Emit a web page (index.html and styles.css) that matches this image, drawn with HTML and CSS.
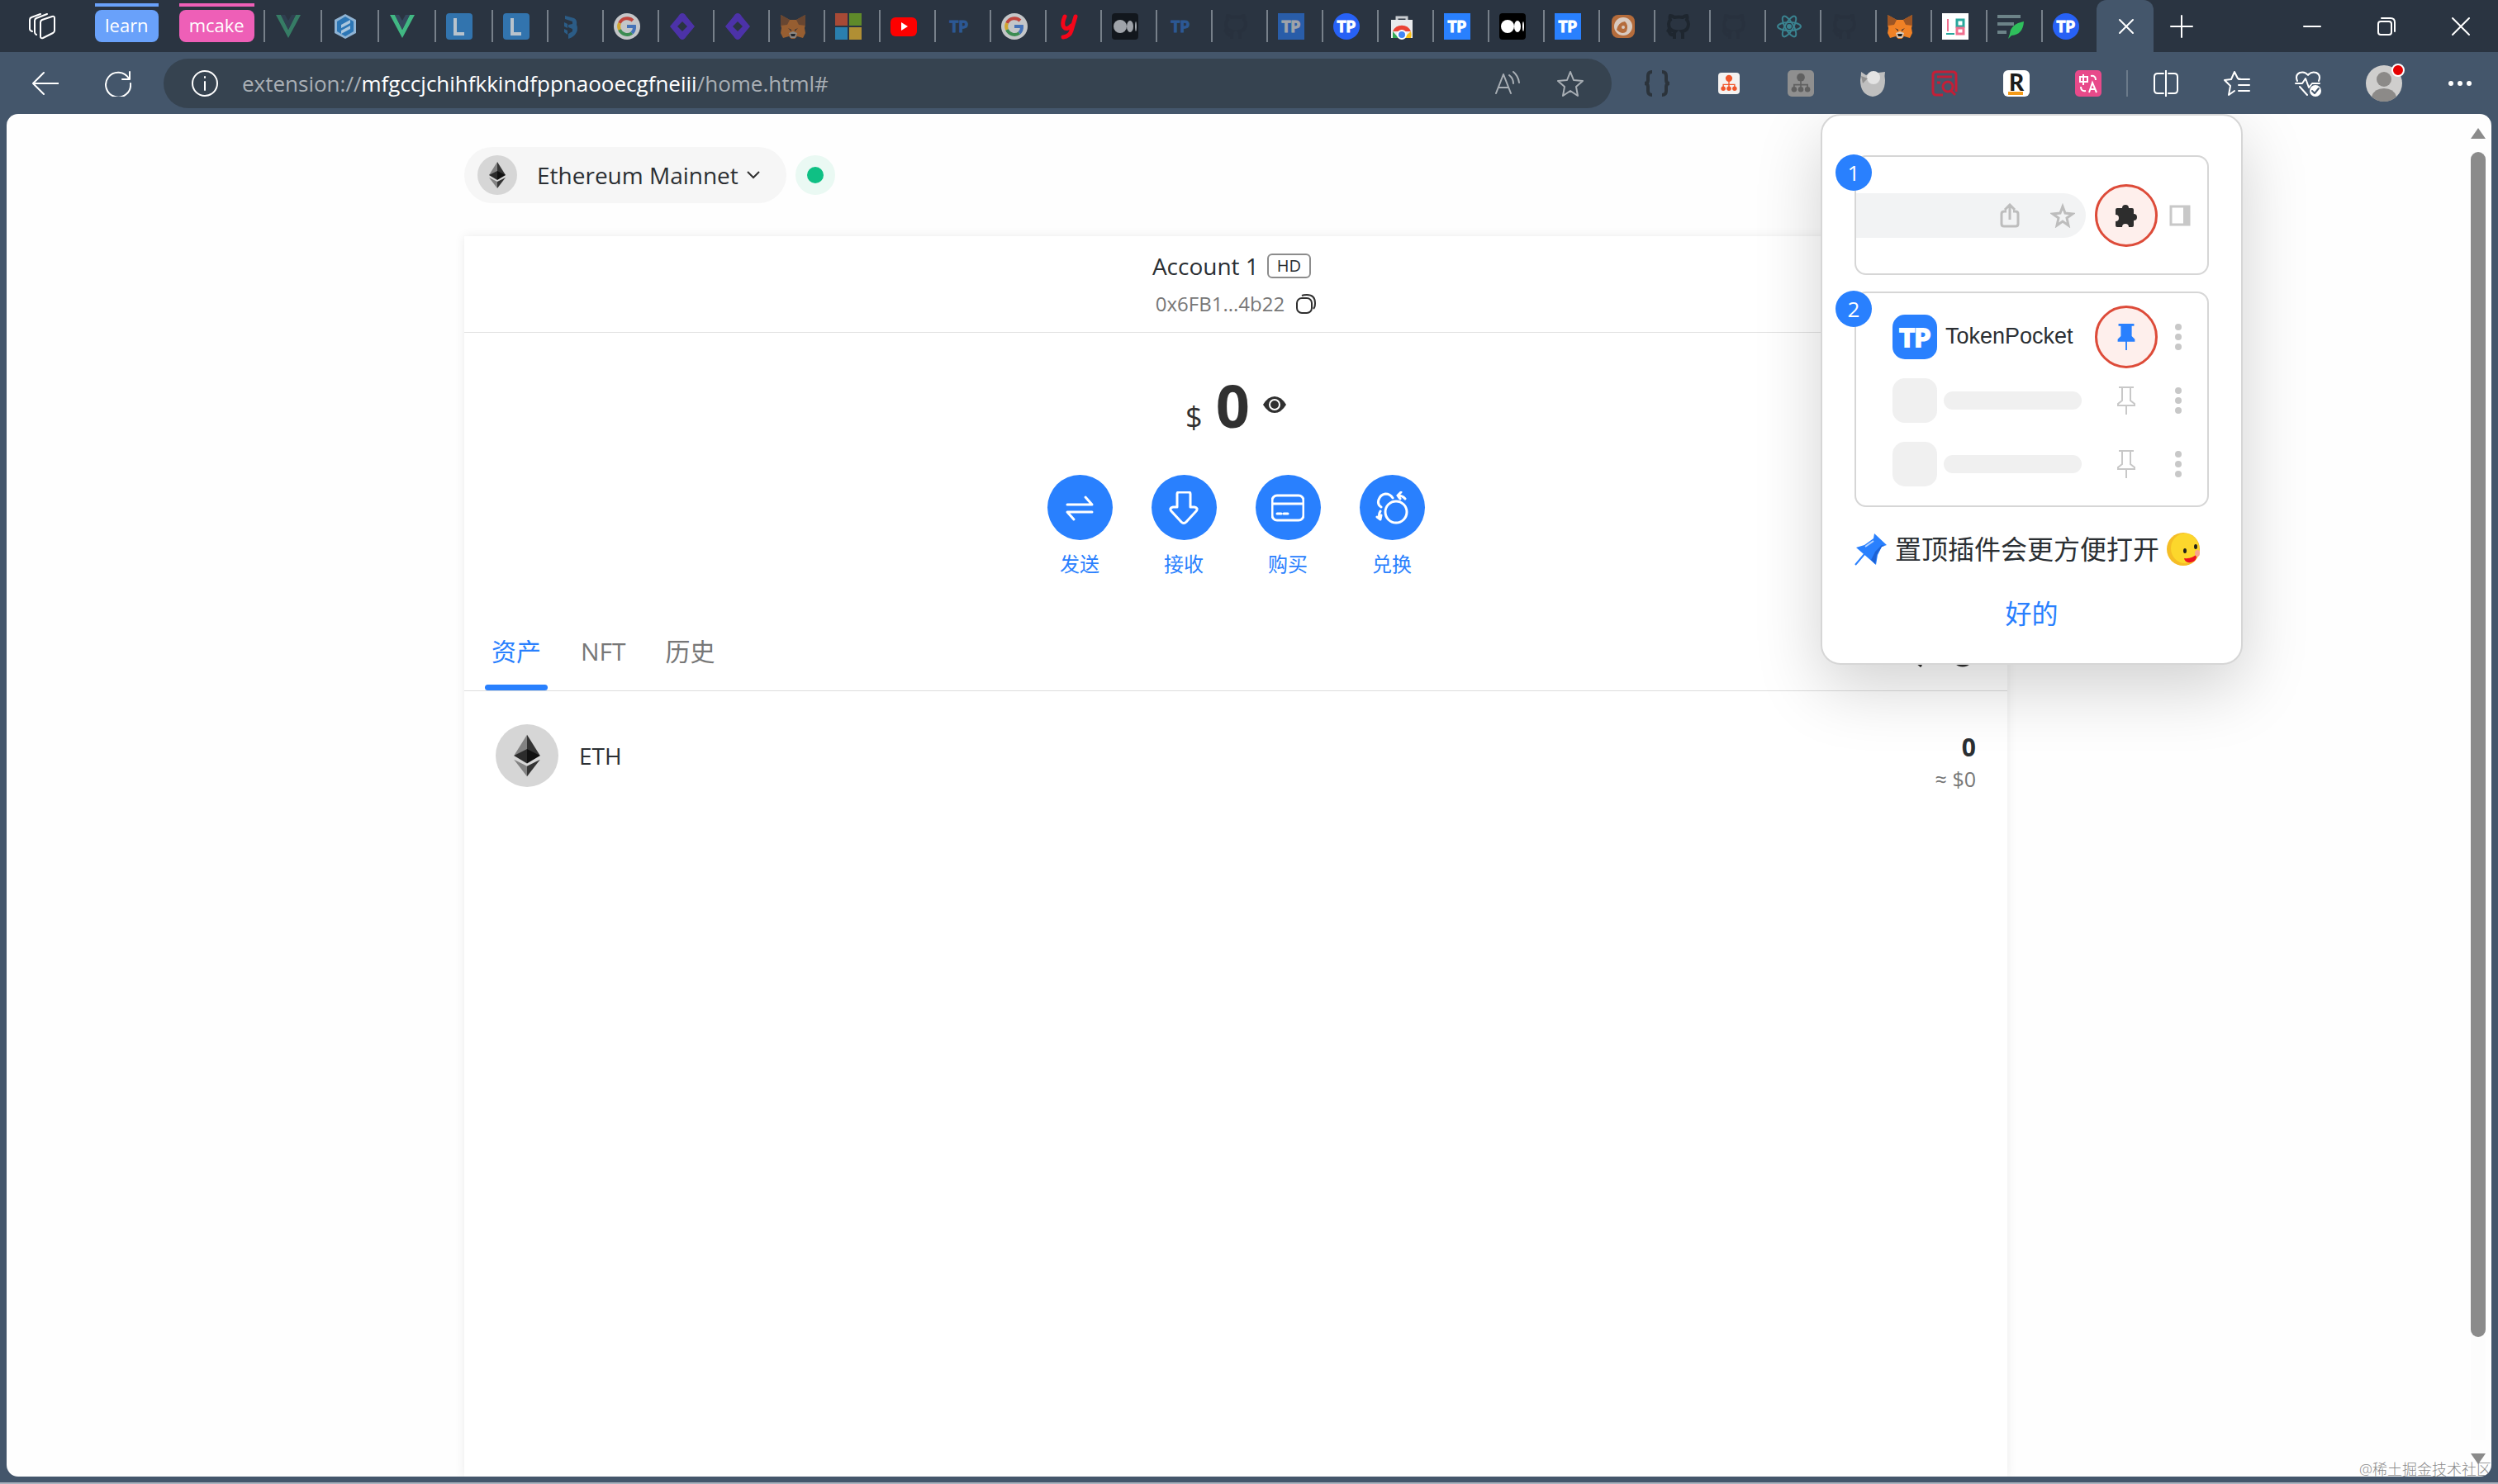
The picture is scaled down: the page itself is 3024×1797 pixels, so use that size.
FILE: index.html
```html
<!DOCTYPE html>
<html lang="zh-CN">
<head>
    <meta charset="UTF-8">
    <meta name="viewport" content="width=device-width, initial-scale=1.0">
    <title>TokenPocket</title>
    <link rel="stylesheet" href="styles.css">
</head>
<body>
    <!-- Shared icons -->
    <svg class="sprite" aria-hidden="true">
        <symbol id="i-vue" viewBox="0 0 32 32">
            <path d="M1 2h6l9 18 9-18h6L16 30z" fill="#41b883"/>
            <path d="M7 2h5l4 7 4-7h5l-9 18z" fill="#34495e"/>
        </symbol>
        <symbol id="i-hex" viewBox="0 0 32 32">
            <path d="M16 1l13 7v16l-13 7-13-7V8z" fill="#8fb3d3"/>
            <path d="M16 4l10 6v12l-10 6-10-6V10z" fill="#2c76b5"/>
            <path d="M11 14l11-6v4l-11 6zM11 21l11-6v4l-11 6z" fill="#a9c6de"/>
        </symbol>
        <symbol id="i-l" viewBox="0 0 32 32">
            <rect width="32" height="32" rx="4" fill="#3274ae"/>
            <path d="M11 6v19h11" fill="none" stroke="#b9c3cc" stroke-width="4"/>
        </symbol>
        <symbol id="i-shield" viewBox="0 0 32 32">
            <path d="M8 3l11 3q4 2 3 8 2 4 0 9-3 6-10 8v-6l5-3v-3l-5-2v-3l5-1v-3l-9-3zM7 11l4 2v5l-4-2zM7 19l4 2v5l-4-3z" fill="#2b5c86"/>
        </symbol>
        <symbol id="i-google" viewBox="0 0 32 32">
            <circle cx="16" cy="16" r="16" fill="#c4c6c8"/>
            <g fill="none" stroke-width="4">
                <path d="M23 9a10 10 0 0 0-16 3" stroke="#c0443c"/>
                <path d="M7 12a10 10 0 0 0 0 8" stroke="#d0a530"/>
                <path d="M7 20a10 10 0 0 0 15 4" stroke="#3c8c52"/>
                <path d="M16 16h9a10 10 0 0 1-3 8" stroke="#4472b8"/>
            </g>
        </symbol>
        <symbol id="i-diamond" viewBox="0 0 32 32">
            <path d="M16 0q3 0 5 4l10 12-10 12q-5 8-10 0L1 16 11 4q2-4 5-4z" fill="#4c32a8"/>
            <path d="M16 10l6 6-6 6-6-6z" fill="#2a3441"/>
        </symbol>
        <symbol id="i-fox" viewBox="0 0 32 32">
            <path d="M1 2l11 6h8l11-6v12l-1 4 1 6-3 6-7-2-3 3h-4l-3-3-7 2-3-6 1-6-1-4z" fill="#f08125"/>
            <path d="M1 2l11 6-3 6-8 1zM31 2l-11 6 3 6 8 1z" fill="#9c5524"/>
            <path d="M10 18l4 2v2zM22 18l-4 2v2z" fill="#2b2b33"/>
            <path d="M11 24l5-2 5 2-2 6h-6z" fill="#d9c8b8"/>
            <path d="M13 25h6l-1 3h-4z" fill="#1c1c1c"/>
        </symbol>
        <symbol id="i-ms" viewBox="0 0 32 32">
            <path d="M0 0h15v15H0z" fill="#a84a36"/>
            <path d="M17 0h15v15H17z" fill="#5f8a2a"/>
            <path d="M0 17h15v15H0z" fill="#2a7fae"/>
            <path d="M17 17h15v15H17z" fill="#b08f34"/>
        </symbol>
        <symbol id="i-youtube" viewBox="0 0 32 32">
            <rect y="5" width="32" height="23" rx="6" fill="#fe0000"/>
            <path d="M13 11l8 5-8 5z" fill="#fff"/>
        </symbol>
        <symbol id="i-y" viewBox="0 0 32 32">
            <path d="M10 4q-4 9-1 13t9-2M23 4l-5 17q-2 7-10 8" fill="none" stroke="#f5061a" stroke-width="5" stroke-linecap="round"/>
        </symbol>
        <symbol id="i-medium" viewBox="0 0 32 32">
            <rect width="32" height="32" rx="4" fill="#000"/>
            <circle cx="10" cy="16" r="8" fill="#fff"/>
            <ellipse cx="22" cy="16" rx="4" ry="7" fill="#fff"/>
            <ellipse cx="29" cy="16" rx="1" ry="6" fill="#fff"/>
        </symbol>
        <symbol id="i-github" viewBox="0 0 32 32">
            <path d="M11 31v-5q-5 1-6-3-1-2-3-3M21 31v-6q0-2-1-3 8-1 8-9 0-3-2-5 1-3 0-5-2 0-5 2-5-1-10 0-3-2-5-2-1 2 0 5-2 2-2 5 0 8 8 9-1 1-1 3v6" fill="none" stroke="#1e262f" stroke-width="4"/>
        </symbol>
        <symbol id="i-store" viewBox="0 0 32 32">
            <path d="M10 9V5h12v4" fill="none" stroke="#c9cdd1" stroke-width="3"/>
            <path d="M3 8h26v22H3z" fill="#e9ebed"/>
            <path d="M5 22a12 12 0 0 1 22 0H16z" fill="#ea4335"/>
            <path d="M27 22a12 12 0 0 1 0 8h-9z" fill="#fbc116"/>
            <path d="M5 22l7 8H5z" fill="#34a853"/>
            <circle cx="16" cy="26" r="5" fill="#4285f4" stroke="#fff" stroke-width="2"/>
        </symbol>
        <symbol id="i-swirl" viewBox="0 0 32 32">
            <rect x="2" y="2" width="28" height="28" rx="8" fill="#b56c3b"/>
            <circle cx="16" cy="16" r="11" fill="#d9cabf"/>
            <path d="M8 20q2-9 10-10 5 4 2 12-5 5-12-2z" fill="#b56c3b"/>
            <circle cx="16" cy="17" r="2" fill="#d9cabf"/>
        </symbol>
        <symbol id="i-react" viewBox="0 0 32 32">
            <g fill="none" stroke="#3a8390" stroke-width="2">
                <ellipse cx="16" cy="16" rx="14" ry="5"/>
                <ellipse cx="16" cy="16" rx="14" ry="5" transform="rotate(60 16 16)"/>
                <ellipse cx="16" cy="16" rx="14" ry="5" transform="rotate(120 16 16)"/>
            </g>
            <circle cx="16" cy="16" r="3" fill="#3a8390"/>
        </symbol>
        <symbol id="i-lb" viewBox="0 0 32 32">
            <rect width="32" height="32" fill="#fff"/>
            <path d="M7 7v15" stroke="#f0708f" stroke-width="2"/>
            <path d="M5 25h10" stroke="#28a79d" stroke-width="2"/>
            <path d="M18 8h8v8h-8z" fill="none" stroke="#28a79d" stroke-width="3"/>
            <path d="M18 18h8v7h-8z" fill="none" stroke="#f0708f" stroke-width="3"/>
        </symbol>
        <symbol id="i-feather" viewBox="0 0 32 32">
            <path d="M0 2h28v4H0zM0 11h20v4H0zM0 21h11v4H0z" fill="#6c8388"/>
            <path d="M32 10q-16 3-17 15l-2 6 4-4q14-1 15-17z" fill="#2fbf5c"/>
        </symbol>
        <symbol id="i-eth" viewBox="0 0 48 48">
            <circle cx="24" cy="24" r="24" fill="#d6d6d6"/>
            <path d="M24 8v17l-10-1z" fill="#828282"/>
            <path d="M24 8v17l10-1z" fill="#343434"/>
            <path d="M14 24l10-5v11z" fill="#2c2c2c"/>
            <path d="M34 24l-10-5v11z" fill="#111"/>
            <path d="M14 27l10 5v8z" fill="#828282"/>
            <path d="M34 27l-10 5v8z" fill="#343434"/>
        </symbol>
        <symbol id="i-pin" viewBox="0 0 24 36">
            <path d="M3 2h18M7 2v16l-5 4v2h20v-2l-5-4V2M12 24v11" fill="none" stroke="#c8c8c8" stroke-width="2"/>
        </symbol>
        <symbol id="i-dots" viewBox="0 0 8 32">
            <circle cx="4" cy="4" r="4"/>
            <circle cx="4" cy="16" r="4"/>
            <circle cx="4" cy="28" r="4"/>
        </symbol>
        <symbol id="i-org" viewBox="0 0 32 32">
            <circle cx="16" cy="7" r="6"/>
            <path d="M15 12h2v5h10v5h-2v-3h-8v3h-2v-3H7v3H5v-5h10z"/>
            <circle cx="6" cy="25" r="4"/>
            <circle cx="16" cy="25" r="4"/>
            <circle cx="26" cy="25" r="4"/>
        </symbol>
    </svg>

    <!-- Tab strip -->
    <header class="tab-strip">
        <button class="icon-button workspaces" aria-label="Workspaces">
            <svg viewBox="0 0 32 32" class="line"><path d="M14 11q0-2 2-3l12-4q3-1 3 2v15q0 2-2 3l-12 6q-3 1-3-2zM9 26q-2-1-2-3V9q0-2 2-3l13-5M4 22q-3-1-3-3V8q0-2 2-3l11-4"/></svg>
        </button>
        <button class="tab-group tab-group-blue">learn</button>
        <button class="tab-group tab-group-pink">mcake</button>
        <nav class="tabs">
            <button class="tab tab-wide" aria-label="Vue"><svg class="dim"><use href="#i-vue"/></svg></button>
            <button class="tab tab-wide" aria-label="Element"><svg><use href="#i-hex"/></svg></button>
            <button class="tab tab-wide" aria-label="Vue"><svg><use href="#i-vue"/></svg></button>
            <button class="tab tab-wide" aria-label="L"><svg><use href="#i-l"/></svg></button>
            <button class="tab" aria-label="L"><svg><use href="#i-l"/></svg></button>
            <button class="tab" aria-label="Docs"><svg><use href="#i-shield"/></svg></button>
            <button class="tab" aria-label="Google"><svg><use href="#i-google"/></svg></button>
            <button class="tab" aria-label="Icons"><svg><use href="#i-diamond"/></svg></button>
            <button class="tab" aria-label="Icons"><svg><use href="#i-diamond"/></svg></button>
            <button class="tab" aria-label="MetaMask"><svg class="dim"><use href="#i-fox"/></svg></button>
            <button class="tab" aria-label="Microsoft"><svg><use href="#i-ms"/></svg></button>
            <button class="tab" aria-label="YouTube"><svg><use href="#i-youtube"/></svg></button>
            <button class="tab"><span class="tp tp-plain">TP</span></button>
            <button class="tab" aria-label="Google"><svg><use href="#i-google"/></svg></button>
            <button class="tab" aria-label="Youdao"><svg><use href="#i-y"/></svg></button>
            <button class="tab" aria-label="Medium"><svg class="dim"><use href="#i-medium"/></svg></button>
            <button class="tab"><span class="tp tp-plain">TP</span></button>
            <button class="tab" aria-label="GitHub"><svg class="faint"><use href="#i-github"/></svg></button>
            <button class="tab"><span class="tp dim">TP</span></button>
            <button class="tab"><span class="tp tp-round">TP</span></button>
            <button class="tab" aria-label="Web Store"><svg><use href="#i-store"/></svg></button>
            <button class="tab"><span class="tp">TP</span></button>
            <button class="tab" aria-label="Medium"><svg><use href="#i-medium"/></svg></button>
            <button class="tab"><span class="tp">TP</span></button>
            <button class="tab" aria-label="Wallet"><svg><use href="#i-swirl"/></svg></button>
            <button class="tab" aria-label="GitHub"><svg><use href="#i-github"/></svg></button>
            <button class="tab" aria-label="GitHub"><svg class="faint"><use href="#i-github"/></svg></button>
            <button class="tab" aria-label="React"><svg><use href="#i-react"/></svg></button>
            <button class="tab" aria-label="GitHub"><svg class="faint"><use href="#i-github"/></svg></button>
            <button class="tab" aria-label="MetaMask"><svg><use href="#i-fox"/></svg></button>
            <button class="tab" aria-label="LB"><svg><use href="#i-lb"/></svg></button>
            <button class="tab" aria-label="Notes"><svg><use href="#i-feather"/></svg></button>
            <button class="tab"><span class="tp tp-round">TP</span></button>
            <button class="tab tab-active" aria-label="Close tab"><svg viewBox="0 0 32 32" class="line"><path d="M8 8l16 16M24 8L8 24"/></svg></button>
        </nav>
        <button class="icon-button new-tab" aria-label="New tab"><svg viewBox="0 0 32 32" class="line"><path d="M16 3v26M3 16h26"/></svg></button>
        <div class="window-controls">
            <button class="icon-button" aria-label="Minimize"><svg viewBox="0 0 32 32" class="line"><path d="M6 16h20"/></svg></button>
            <button class="icon-button" aria-label="Restore"><svg viewBox="0 0 32 32" class="line"><rect x="6" y="10" width="16" height="16" rx="3"/><path d="M10 6h11q5 0 5 5v11"/></svg></button>
            <button class="icon-button" aria-label="Close"><svg viewBox="0 0 32 32" class="line"><path d="M6 6l20 20M26 6L6 26"/></svg></button>
        </div>
    </header>

    <!-- Toolbar -->
    <div class="toolbar">
        <button class="icon-button" aria-label="Back"><svg viewBox="0 0 32 32" class="line"><path d="M32 16H1M14 3L1 16l13 13"/></svg></button>
        <button class="icon-button reload" aria-label="Reload"><svg viewBox="0 0 32 32" class="line"><path d="M30 2v9h-9M29 10A15 15 0 1 0 31 16"/></svg></button>
        <div class="address-bar">
            <button class="icon-button" aria-label="Site information"><svg viewBox="0 0 32 32" class="line"><circle cx="16" cy="16" r="15"/><path d="M16 14v10M16 8v1"/></svg></button>
            <div class="address">extension://<b>mfgccjchihfkkindfppnaooecgfneiii</b>/home.html#</div>
            <button class="icon-button muted" aria-label="Read aloud"><svg viewBox="0 0 32 32" class="line"><path d="M2 28L11 5l9 23M5 21h12M18 6q5 4 5 10M23 2q6 5 7 13"/></svg></button>
            <button class="icon-button muted" aria-label="Favorite"><svg viewBox="0 0 32 32" class="line"><path d="M16 2l4 10 11 1-8 7 2 11-9-6-9 6 2-11-8-7 11-1z"/></svg></button>
        </div>
        <div class="extensions">
            <button class="icon-button" aria-label="JSON"><svg viewBox="0 0 32 32"><path d="M10 2q-5 0-5 5v5q0 4-4 4 4 0 4 4v5q0 5 5 5M22 2q5 0 5 5v5q0 4 4 4-4 0-4 4v5q0 5-5 5" fill="none" stroke="#2b333b" stroke-width="4"/></svg></button>
            <button class="icon-button" aria-label="Sitemap"><svg viewBox="0 0 32 32"><rect x="3" y="3" width="26" height="26" rx="4" fill="#f5f2f0"/><use href="#i-org" x="5" y="5" width="22" height="22" fill="#f0562b"/></svg></button>
            <button class="icon-button" aria-label="Sitemap"><svg viewBox="0 0 32 32"><rect width="32" height="32" rx="5" fill="#8f8f8f"/><use href="#i-org" x="3" y="3" width="26" height="26" fill="#606060"/></svg></button>
            <button class="icon-button" aria-label="Guard"><svg viewBox="0 0 32 32"><path d="M2 2l6 4q8-5 15-3l8-1q-1 5 0 10 0 18-15 20Q1 30 1 12 2 7 2 2z" fill="#bfbfbf"/><circle cx="17" cy="9" r="8" fill="#e3e3e3"/><path d="M2 7l8 3-6 6z" fill="#909090"/></svg></button>
            <button class="icon-button" aria-label="Inspector"><svg viewBox="0 0 32 32" fill="none" stroke="#c41f37" stroke-width="3"><path d="M14 30H6q-4 0-4-4V6q0-4 4-4h20q4 0 4 4v20M7 8h18M7 15h4"/><circle cx="20" cy="20" r="6"/><path d="M24 25l5 5"/></svg></button>
            <button class="icon-button" aria-label="R"><svg viewBox="0 0 32 32"><rect width="32" height="32" rx="6" fill="#fff"/><path d="M6 26h18v4H6z" fill="#f49a17"/><text x="16" y="25" class="r-text">R</text></svg></button>
            <button class="icon-button" aria-label="Translate"><svg viewBox="0 0 32 32"><rect width="32" height="32" rx="5" fill="#e84a8a"/><g fill="none" stroke="#fff" stroke-width="2"><path d="M6 8h9v6H6zM10 5v13M19 7q6-1 6 5M7 20q0 6 6 5"/><path d="M17 27l4-12 5 12M18 23h6"/></g></svg></button>
        </div>
        <div class="browser-actions">
            <button class="icon-button" aria-label="Split screen"><svg viewBox="0 0 32 32" class="line"><path d="M13 4H6Q2 4 2 8v16q0 4 4 4h7M19 4h7q4 0 4 4v16q0 4-4 4h-7M16 0v32"/></svg></button>
            <button class="icon-button" aria-label="Favorites"><svg viewBox="0 0 32 32" class="line"><path d="M21 11l-4-1-4-8-4 9-8 1 7 7-2 11 7-5M18 11h13M18 18h13M18 25h13"/></svg></button>
            <button class="icon-button" aria-label="Browser essentials"><svg viewBox="0 0 32 32" class="line"><path d="M3 13Q0 6 6 3q6-2 10 3 4-5 10-3 6 3 3 10M1 16h8l4-6 4 11 4-5h9M6 20l9 10"/><circle cx="25" cy="25" r="7" fill="#fff" stroke="none"/><path d="M21 25l3 3 5-6" stroke="#44566b"/></svg></button>
            <button class="avatar" aria-label="Profile"><svg viewBox="0 0 44 44"><circle cx="22" cy="22" r="22" fill="#cfcecd"/><circle cx="22" cy="17" r="9" fill="#8c8a88"/><path d="M7 38q3-10 15-10t15 10q-6 6-15 6T7 38z" fill="#8c8a88"/></svg><span class="avatar-dot"></span></button>
            <button class="icon-button" aria-label="Settings and more"><svg viewBox="0 0 32 32" fill="#fff"><circle cx="5" cy="16" r="3"/><circle cx="16" cy="16" r="3"/><circle cx="27" cy="16" r="3"/></svg></button>
        </div>
    </div>

    <div class="viewport">
        <main class="content">
            <div class="wallet">
                <div class="network-row">
                    <button class="network">
                        <svg class="network-icon"><use href="#i-eth"/></svg>
                        <span>Ethereum Mainnet</span>
                        <svg class="chevron" viewBox="0 0 16 10"><path d="M1 1l7 7 7-7"/></svg>
                    </button>
                    <span class="status"></span>
                </div>

                <section class="panel">
                    <div class="account">
                        <div class="account-name">Account 1 <span class="hd">HD</span></div>
                        <div class="account-address">
                            <span>0x6FB1...4b22</span>
                            <button class="copy" aria-label="Copy"><svg viewBox="0 0 24 24"><rect x="1" y="5" width="18" height="18" rx="6"/><path d="M7 2q2-1 6-1 10 0 10 10 0 5-2 7"/></svg></button>
                        </div>
                    </div>

                    <div class="balance">
                        <div class="amount"><span class="currency">$</span><strong>0</strong></div>
                        <button class="eye" aria-label="Hide balance"><svg viewBox="0 0 28 20"><path d="M0 10Q6 0 14 0t14 10q-6 10-14 10T0 10z" fill="#303030"/><circle cx="14" cy="10" r="6" fill="#303030" stroke="#fff" stroke-width="2"/></svg></button>
                    </div>

                    <div class="actions">
                        <button class="action">
                            <span class="action-icon"><svg viewBox="0 0 40 40"><path d="M5 16h30l-8-9M35 25H5l8 9"/></svg></span>
                            发送
                        </button>
                        <button class="action">
                            <span class="action-icon"><svg viewBox="0 0 40 40"><path d="M14 1h12q2 0 2 2v16h5q5 1 2 5L23 37q-3 3-6 0L5 24q-3-4 2-5h5V3q0-2 2-2z"/></svg></span>
                            接收
                        </button>
                        <button class="action">
                            <span class="action-icon"><svg viewBox="0 0 40 40"><rect x="1" y="5" width="38" height="30" rx="6"/><path d="M1 15h38M7 27h5M15 27h5"/></svg></span>
                            购买
                        </button>
                        <button class="action">
                            <span class="action-icon"><svg viewBox="0 0 40 40"><circle cx="25" cy="25" r="13"/><path d="M7 19Q2 16 4 10 6 4 12 3q6 0 9 5M36 9q-3-4-9-4l4-4M27 5l3 4M6 24q-3 5 0 10M6 34l-4-3M6 34l1-5"/></svg></span>
                            兑换
                        </button>
                    </div>

                    <div class="asset-nav">
                        <div class="asset-tabs" role="tablist">
                            <button class="asset-tab selected" role="tab">资产</button>
                            <button class="asset-tab" role="tab">NFT</button>
                            <button class="asset-tab" role="tab">历史</button>
                        </div>
                        <div class="asset-tools">
                            <button aria-label="Search"><svg viewBox="0 0 28 28"><circle cx="10" cy="12" r="10"/><path d="M18 20l8 7"/></svg></button>
                            <button aria-label="Add"><svg viewBox="0 0 28 28"><circle cx="14" cy="14" r="12"/><path d="M14 8v12M8 14h12"/></svg></button>
                        </div>
                    </div>

                    <div class="asset">
                        <svg class="asset-icon"><use href="#i-eth"/></svg>
                        <span class="asset-name">ETH</span>
                        <div class="asset-value">
                            <strong>0</strong>
                            <span>≈ $0</span>
                        </div>
                    </div>
                </section>
            </div>
        </main>

        <div class="scrollbar">
            <span class="arrow-up"></span>
            <div class="track"><div class="thumb"></div></div>
            <span class="arrow-down"></span>
        </div>

        <!-- Pin the extension hint -->
        <aside class="guide">
            <div class="guide-card guide-toolbar">
                <span class="step">1</span>
                <div class="guide-bar">
                    <svg class="guide-share" viewBox="0 0 24 30"><path d="M8 10H5q-3 0-3 3v12q0 3 3 3h14q3 0 3-3V13q0-3-3-3h-3M12 20V3M6 8l6-6 6 6"/></svg>
                    <svg class="guide-star" viewBox="0 0 30 30"><path d="M15 4l3 8 9 1-7 5 2 9-7-5-7 5 2-9-7-5 9-1z"/></svg>
                </div>
                <span class="ring"><svg viewBox="0 0 28 28"><path d="M9 5a4 4 0 0 1 8 0h4q2 0 2 2v5a4 4 0 0 1 0 8v6q0 2-2 2h-4a4 4 0 0 0-8 0H3q-2 0-2-2v-5a4 4 0 0 0 0-8V7q0-2 2-2z" fill="#2d2d2d"/></svg></span>
                <svg class="guide-side" viewBox="0 0 26 26"><path d="M2 2h22v22H2z" fill="none" stroke="#c8c8c8" stroke-width="3"/><path d="M17 1h8v24h-8z" fill="#c8c8c8"/></svg>
            </div>
            <div class="guide-card guide-list">
                <span class="step">2</span>
                <div class="guide-row">
                    <span class="tp tp-logo">TP</span>
                    <span class="guide-name">TokenPocket</span>
                    <span class="ring"><svg viewBox="0 0 24 36"><path d="M2 1h20v3h-3v13l4 4v3H1v-3l4-4V4H2zM11 24h2v11h-2z" fill="#2980fe"/></svg></span>
                    <svg class="dots"><use href="#i-dots"/></svg>
                </div>
                <div class="guide-row">
                    <span class="ghost-icon"></span>
                    <span class="ghost-name"></span>
                    <svg class="pin"><use href="#i-pin"/></svg>
                    <svg class="dots"><use href="#i-dots"/></svg>
                </div>
                <div class="guide-row">
                    <span class="ghost-icon"></span>
                    <span class="ghost-name"></span>
                    <svg class="pin"><use href="#i-pin"/></svg>
                    <svg class="dots"><use href="#i-dots"/></svg>
                </div>
            </div>
            <p class="guide-message">
                <svg viewBox="0 0 40 40"><path d="M24 1l15 14-6 2-5 10-2 12L2 18l10-3 11-8z" fill="#2980fe"/><path d="M36 16l-3 1-6 10-2 11-5-5 5-10 8-8z" fill="#1c62d6"/><path d="M12 26L1 39" stroke="#2980fe" stroke-width="2"/><path d="M13 17l10-7" stroke="#b7d4ff" stroke-width="2"/></svg>
                置顶插件会更方便打开
                <svg viewBox="0 0 40 40"><circle cx="20" cy="20" r="20" fill="#f5bd25"/><ellipse cx="22" cy="19" rx="17" ry="18" fill="#fcd72c"/><path d="M21 31q10 1 15-5 1 9-7 10-7 1-8-5z" fill="#ec1420"/><ellipse cx="37" cy="25" rx="3" ry="4" fill="#f9a58d"/><ellipse cx="22" cy="22" rx="2" ry="3" fill="#20201a"/><ellipse cx="35" cy="17" rx="2" ry="3" fill="#20201a"/></svg>
            </p>
            <button class="guide-ok">好的</button>
        </aside>

        <span class="watermark">@稀土掘金技术社区</span>
    </div>
</body>
</html>
```

FILE: styles.css
```css
* {
    box-sizing: border-box;
}
body {
    margin: 0;
    min-height: 100vh;
    display: flex;
    flex-direction: column;
    background-color: #44566b;
    border-bottom: 2px solid #a9b2be;
    color: #2b2f33;
    font-family: "Open Sans", "Noto Sans CJK SC", sans-serif;
    font-size: 28px;
}
button {
    margin: 0;
    padding: 0;
    border: none;
    background: none;
    color: inherit;
    font: inherit;
    cursor: pointer;
}
svg {
    display: block;
    flex: none;
}
.sprite {
    position: absolute;
    width: 0;
    height: 0;
}
.line {
    fill: none;
    stroke: currentColor;
    stroke-width: 2;
    stroke-linecap: round;
    stroke-linejoin: round;
}
.icon-button {
    flex: none;
    width: 32px;
    height: 32px;
    color: #fff;
}
.icon-button svg {
    width: 32px;
    height: 32px;
}
.tp {
    display: block;
    width: 32px;
    height: 32px;
    background-color: #2980fe;
    color: #fff;
    font-family: Lato, sans-serif;
    font-size: 18px;
    font-weight: 900;
    line-height: 32px;
    text-align: center;
    -webkit-text-stroke: 1px;
}
.tp-plain {
    background: none;
    color: #2c5894;
}
.tp-round {
    border-radius: 50%;
    background-color: #2761f5;
}
.r-text {
    font-family: Lato, sans-serif;
    font-size: 28px;
    font-weight: 900;
    text-anchor: middle;
    fill: #1c1c1c;
}

/* Tab strip */
.tab-strip {
    display: flex;
    align-items: center;
    height: 63px;
    padding-left: 35px;
    background-color: #2a3441;
}
.tab-group {
    height: 47px;
    margin-bottom: 8px;
    padding: 0 12px;
    border-top: 4px solid;
    color: #fff;
    font-size: 22px;
    line-height: 38px;
    position: relative;
    z-index: 0;
}
.tab-group::before {
    content: "";
    position: absolute;
    inset: 4px 0 0;
    border-radius: 8px;
    z-index: -1;
}
.tab-group-blue {
    margin-left: 48px;
    border-color: #69a1fa;
}
.tab-group-blue::before {
    background-color: #69a1fa;
}
.tab-group-pink {
    margin-left: 25px;
    border-color: #ee5fb7;
}
.tab-group-pink::before {
    background-color: #ee5fb7;
}
.tabs {
    display: flex;
    align-self: stretch;
    align-items: center;
    margin-left: 11px;
}
.tab {
    width: 67px;
    height: 39px;
    padding-left: 12px;
    border-left: 2px solid #77808a;
}
.tab-wide {
    width: 69px;
}
.tab svg {
    width: 32px;
    height: 32px;
}
.tab-active {
    align-self: stretch;
    width: 69px;
    height: auto;
    padding: 0 20px;
    border: none;
    border-radius: 12px 12px 0 0;
    background-color: #44566b;
    color: #fff;
}
.dim {
    opacity: 0.55;
}
.faint {
    opacity: 0.15;
}
.new-tab {
    margin-left: 18px;
}
.window-controls {
    display: flex;
    gap: 58px;
    margin-left: auto;
    padding-right: 29px;
}

/* Toolbar */
.toolbar {
    display: flex;
    align-items: center;
    height: 75px;
    padding: 0 30px 0 39px;
}
.reload {
    margin-left: 56px;
}
.address-bar {
    flex: 1;
    display: flex;
    align-items: center;
    height: 60px;
    margin: 0 39px;
    padding: 0 34px;
    border-radius: 30px;
    background-color: #364350;
}
.address {
    flex: 1;
    margin-left: 29px;
    color: #a9afb5;
    font-size: 26px;
    white-space: nowrap;
}
.address b {
    color: #fff;
    font-weight: 400;
}
.muted {
    margin-left: 44px;
    color: #a9afb5;
}
.extensions {
    display: flex;
    gap: 55px;
    padding-right: 30px;
    border-right: 2px solid #6b7a8a;
}
.browser-actions {
    display: flex;
    align-items: center;
    gap: 54px;
    padding-left: 30px;
}
.avatar {
    position: relative;
    width: 44px;
    height: 44px;
}
.avatar svg {
    width: 44px;
    height: 44px;
}
.avatar-dot {
    position: absolute;
    top: -2px;
    right: -3px;
    width: 16px;
    height: 16px;
    border: 2px solid #fff;
    border-radius: 50%;
    background-color: #e60000;
}

/* Page */
.viewport {
    flex: 1;
    display: flex;
    position: relative;
    margin: 0 8px 7px;
    border-radius: 14px;
    background-color: #fefefe;
    overflow: hidden;
}
.content {
    flex: 1;
    display: flex;
    justify-content: center;
    padding-top: 40px;
}
.wallet {
    display: flex;
    flex-direction: column;
    width: 100%;
    max-width: 1868px;
}
.network-row {
    display: flex;
    align-items: center;
    gap: 11px;
    margin-bottom: 40px;
}
.network {
    display: flex;
    align-items: center;
    height: 68px;
    padding: 0 32px 0 16px;
    border-radius: 34px;
    background-color: #f6f6f6;
}
.network-icon {
    width: 48px;
    height: 48px;
    margin-right: 24px;
}
.chevron {
    width: 16px;
    height: 10px;
    margin-left: 10px;
    fill: none;
    stroke: #303030;
    stroke-width: 2;
}
.status {
    width: 48px;
    height: 48px;
    border: 14px solid #eaf9f3;
    border-radius: 50%;
    background-color: #0fc084;
}
.panel {
    flex: 1;
    background-color: #fff;
    box-shadow: 0 0 12px rgba(0, 0, 0, 0.08);
}
.account {
    display: flex;
    flex-direction: column;
    align-items: center;
    gap: 12px;
    padding: 17px 0 19px;
    border-bottom: 1px solid #e2e2e2;
}
.account-name {
    display: flex;
    align-items: center;
    gap: 10px;
    padding-right: 10px;
    line-height: 38px;
}
.hd {
    padding: 0 10px;
    border: 2px solid #8c8c8c;
    border-radius: 6px;
    font-size: 20px;
    line-height: 26px;
}
.account-address {
    display: flex;
    align-items: center;
    gap: 14px;
    color: #777;
    font-size: 24px;
    line-height: 30px;
}
.copy svg {
    width: 24px;
    height: 24px;
    fill: none;
    stroke: #303030;
    stroke-width: 2;
}
.balance {
    display: flex;
    justify-content: center;
    align-items: center;
    gap: 16px;
    margin-top: 51px;
    color: #303030;
}
.amount {
    display: flex;
    align-items: baseline;
    gap: 16px;
    font-size: 72px;
    line-height: 72px;
}
.currency {
    font-size: 36px;
    line-height: 36px;
}
.eye svg {
    width: 28px;
    height: 20px;
}
.actions {
    display: flex;
    justify-content: center;
    gap: 47px;
    margin-top: 49px;
}
.action {
    display: flex;
    flex-direction: column;
    align-items: center;
    gap: 14px;
    color: #2980fe;
    font-size: 24px;
    line-height: 30px;
}
.action-icon {
    display: flex;
    align-items: center;
    justify-content: center;
    width: 79px;
    height: 79px;
    border-radius: 50%;
    background-color: #2980fe;
}
.action-icon svg {
    width: 40px;
    height: 40px;
    fill: none;
    stroke: #fff;
    stroke-width: 3;
    stroke-linecap: round;
    stroke-linejoin: round;
}
.asset-nav {
    display: flex;
    justify-content: space-between;
    align-items: flex-end;
    margin-top: 71px;
    padding: 0 40px 0 25px;
    border-bottom: 1px solid #dcdcdc;
}
.asset-tabs {
    display: flex;
    gap: 32px;
}
.asset-tab {
    padding: 0 8px 20px;
    border-bottom: 7px solid transparent;
    color: #777;
    font-size: 30px;
    line-height: 40px;
}
.selected {
    position: relative;
    color: #2980fe;
}
.selected::after {
    content: "";
    position: absolute;
    left: 0;
    right: 0;
    bottom: -7px;
    height: 7px;
    border-radius: 4px;
    background-color: #2980fe;
}
.asset-tools {
    display: flex;
    gap: 34px;
    padding-bottom: 28px;
}
.asset-tools svg {
    width: 28px;
    height: 28px;
    fill: none;
    stroke: #303030;
    stroke-width: 3;
}
.asset {
    display: flex;
    align-items: center;
    gap: 25px;
    padding: 32px 38px;
}
.asset-icon {
    width: 76px;
    height: 76px;
}
.asset-value {
    display: flex;
    flex-direction: column;
    margin-left: auto;
    padding-top: 16px;
    text-align: right;
    color: #777;
    font-size: 25px;
    line-height: 36px;
}
.asset-value strong {
    color: #2b2f33;
    font-size: 30px;
    line-height: 40px;
}

/* Scrollbar */
.scrollbar {
    display: flex;
    flex-direction: column;
    align-items: center;
    gap: 16px;
    width: 32px;
    padding: 17px 0 15px;
}
.arrow-up, .arrow-down {
    border: 9px solid transparent;
}
.arrow-up {
    border-top: 0;
    border-bottom: 13px solid #8b8b8b;
}
.arrow-down {
    border-bottom: 0;
    border-top: 13px solid #8b8b8b;
}
.track {
    flex: 1;
    width: 18px;
    background-color: #fcfcfc;
}
.thumb {
    height: 92%;
    border-radius: 9px;
    background-color: #8b8b8b;
}

/* Guide popup */
.guide {
    position: absolute;
    top: 0;
    right: 301px;
    width: 511px;
    padding: 48px 39px 36px;
    border: 2px solid #d6d6d6;
    border-radius: 24px;
    background-color: #fff;
    box-shadow: 0 28px 80px rgba(0, 0, 0, 0.18);
}
.guide-card {
    position: relative;
    margin-bottom: 20px;
    border: 2px solid #d6d6d6;
    border-radius: 14px;
}
.step {
    position: absolute;
    top: -3px;
    left: -25px;
    width: 44px;
    height: 44px;
    border-radius: 50%;
    background-color: #2980fe;
    color: #fff;
    font-size: 26px;
    line-height: 44px;
    text-align: center;
}
.guide-toolbar {
    display: flex;
    align-items: center;
    height: 145px;
}
.guide-bar {
    flex: 1;
    display: flex;
    justify-content: flex-end;
    align-items: center;
    gap: 37px;
    height: 54px;
    margin-right: 11px;
    padding-right: 13px;
    border-radius: 0 27px 27px 0;
    background-color: #f2f3f4;
}
.guide-share, .guide-star {
    height: 30px;
    fill: none;
    stroke: #bdbdbd;
    stroke-width: 3;
}
.guide-share {
    width: 24px;
}
.guide-star {
    width: 30px;
}
.ring {
    display: flex;
    align-items: center;
    justify-content: center;
    width: 76px;
    height: 76px;
    border: 3px solid #dd4b39;
    border-radius: 50%;
    background-color: #feefec;
}
.ring svg {
    width: 28px;
    height: 34px;
}
.guide-side {
    width: 26px;
    height: 26px;
    margin: 0 20px 0 14px;
}
.guide-list {
    margin-bottom: 0;
    padding: 14px 31px 12px 44px;
}
.guide-row {
    display: flex;
    align-items: center;
    height: 77px;
}
.tp-logo, .ghost-icon {
    width: 54px;
    height: 54px;
    border-radius: 15px;
}
.tp-logo {
    font-size: 30px;
    line-height: 54px;
    -webkit-text-stroke: 2px;
}
.ghost-icon {
    background-color: #f0f0f0;
}
.guide-name {
    flex: 1;
    margin-left: 10px;
    font-family: "Liberation Sans", sans-serif;
    font-size: 27px;
}
.ghost-name {
    width: 167px;
    height: 22px;
    margin-left: 8px;
    border-radius: 11px;
    background-color: #f0f0f0;
}
.pin {
    width: 24px;
    height: 36px;
    margin: 0 26px 0 auto;
}
.dots {
    width: 8px;
    height: 32px;
    margin-left: 21px;
    fill: #c8c8c8;
}
.guide-message {
    display: flex;
    align-items: center;
    gap: 9px;
    margin: 31px 0 0;
    font-size: 32px;
    line-height: 40px;
    white-space: nowrap;
}
.guide-message svg {
    width: 40px;
    height: 40px;
}
.guide-ok {
    display: block;
    margin: 34px auto 0;
    color: #2980fe;
    font-size: 32px;
    line-height: 48px;
}
.watermark {
    position: absolute;
    right: 0;
    bottom: 0;
    color: #8a8a8a;
    font-size: 18px;
    font-weight: 300;
    line-height: 18px;
}
```
